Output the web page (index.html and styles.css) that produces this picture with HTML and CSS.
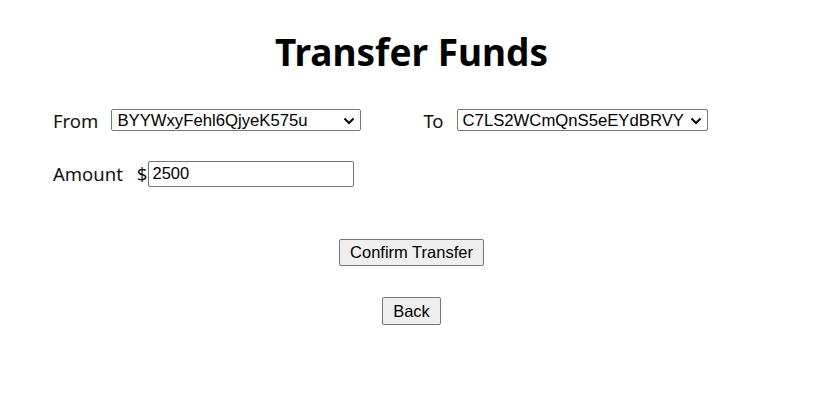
FILE: index.html
```html
<!DOCTYPE html>
<html>
<head>
<meta charset="utf-8">
<link rel="stylesheet" href="styles.css">
</head>
<body>
<div class="page">
  <h1 class="title">Transfer Funds</h1>
  <div class="row">
    <label class="label">From</label>
    <span class="select-wrap sel-from">
      <select class="select"><option>BYYWxyFehl6QjyeK575u</option></select>
      <svg class="chev" width="12" height="8" viewBox="0 0 12 8"><path d="M1.5 1.5 L6 6 L10.5 1.5" fill="none" stroke="#000" stroke-width="2"/></svg>
    </span>
    <label class="label label-to">To</label>
    <span class="select-wrap sel-to">
      <select class="select"><option>C7LS2WCmQnS5eEYdBRVY</option></select>
      <svg class="chev" width="12" height="8" viewBox="0 0 12 8"><path d="M1.5 1.5 L6 6 L10.5 1.5" fill="none" stroke="#000" stroke-width="2"/></svg>
    </span>
  </div>
  <div class="row row-amount">
    <label class="label">Amount</label>
    <span class="dollar">$</span>
    <input class="amount" type="text" value="2500">
  </div>
  <div class="actions">
    <button class="btn btn-confirm">Confirm Transfer</button>
    <button class="btn btn-back">Back</button>
  </div>
</div>
</body>
</html>
```
FILE: styles.css
```css
html, body {
  margin: 0;
  padding: 0;
  background: #fff;
}
.page {
  padding: 26px 47px 0 53px;
  font-family: "Noto Sans", "Open Sans", sans-serif;
  color: #000;
}
.title {
  margin: 0 0 30px 0;
  text-align: center;
  font-size: 37px;
  font-weight: 700;
  line-height: 52px;
}
.row {
  display: flex;
  align-items: center;
  height: 24px;
}
.row-amount {
  margin-top: 28px;
  height: 27px;
}
.label {
  font-size: 18.5px;
  color: #111;
}
.label-to {
  margin-left: 62px;
}
.select-wrap {
  position: relative;
  display: inline-block;
  margin-left: 13px;
  height: 22px;
}
.sel-from {
  width: 250px;
}
.sel-to {
  margin-left: 13px;
  width: 251px;
}
.select {
  -webkit-appearance: none;
  appearance: none;
  font-family: "Liberation Sans", Arial, sans-serif;
  font-size: 16.7px;
  height: 22px;
  width: 100%;
  box-sizing: border-box;
  border: 1px solid #767676;
  border-radius: 2px;
  background: #fff;
  color: #000;
  padding: 0 20px 0 5px;
  margin: 0;
  display: block;
}
.chev {
  position: absolute;
  right: 6px;
  top: 8px;
  pointer-events: none;
}
.dollar {
  font-size: 18.5px;
  margin-left: 14px;
  color: #111;
}
.amount {
  font-family: "Liberation Sans", Arial, sans-serif;
  font-size: 16.5px;
  width: 206px;
  height: 26px;
  box-sizing: border-box;
  border: 1px solid #767676;
  border-radius: 2px;
  padding: 1px 3px;
  margin: 0 0 0 1px;
}
.actions {
  display: flex;
  flex-direction: column;
  align-items: center;
  margin-top: 52px;
}
.btn {
  font-family: "Liberation Sans", Arial, sans-serif;
  font-size: 16.5px;
  color: #000;
  background: #efefef;
  border: 1px solid #767676;
  border-radius: 2px;
  padding: 1px 10px;
  height: 27px;
}
.btn-back {
  margin-top: 31px;
  height: 28px;
  padding: 1px 10px;
}
```
